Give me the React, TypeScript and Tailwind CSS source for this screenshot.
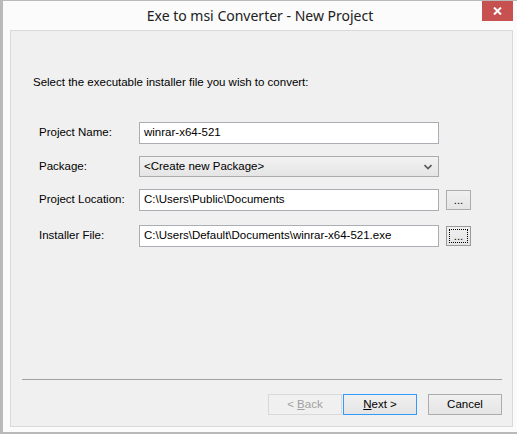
import React from 'react';

const font = { fontFamily: '"Liberation Sans", Arial, sans-serif' };

const Field = ({ value }: { value: string }) => (
  <div className="w-[300px] h-[22px] border border-[#abadb3] bg-white flex items-center pl-[4px] text-black whitespace-nowrap overflow-hidden">
    {value}
  </div>
);

const Browse = ({ focused }: { focused?: boolean }) => (
  <div
    className={`ml-[7px] w-[25px] h-[20px] border bg-gradient-to-b from-[#f0f0f0] to-[#e5e5e5] flex items-center justify-center ${
      focused ? 'border-[#9a9a9a] p-[2px]' : 'border-[#acacac]'
    }`}
  >
    <div
      className={`w-full h-full flex items-center justify-center leading-none text-black ${
        focused ? 'border border-dotted border-black' : ''
      }`}
    >
      <span className="mt-[1px]">...</span>
    </div>
  </div>
);

export default function App() {
  return (
    <div
      className="w-[517px] h-[434px] bg-[#fbfbfb] border-l-[3px] border-t border-b-2 border-[#b9b9b9] flex flex-col"
      style={font}
    >
      {/* title bar */}
      <div className="relative h-[29px] shrink-0 flex justify-center pt-[5px]">
        <span
          className="text-[14px] leading-[20px] text-[#202020]"
          style={{ fontFamily: '"Noto Sans", "Open Sans", sans-serif' }}
        >
          Exe to msi Converter - New Project
        </span>
        <div className="absolute top-0 right-[4px] w-[31px] h-[20px] bg-[#c75050] flex items-center justify-center">
          <svg width="9" height="8" viewBox="0 0 9 8">
            <path d="M1 0.5 L8 7.5 M8 0.5 L1 7.5" stroke="white" strokeWidth="2" />
          </svg>
        </div>
      </div>

      {/* content panel */}
      <div className="ml-[7px] w-[503px] h-[397px] shrink-0 border border-[#d9d9d9] bg-[#f0f0f0] flex flex-col text-[11.5px] text-black">
        <div className="pl-[22px] pt-[45px] leading-[13px]">
          Select the executable installer file you wish to convert:
        </div>

        <div className="pl-[28px] mt-[33px] flex flex-col">
          <div className="flex items-center">
            <span className="w-[100px]">Project Name:</span>
            <Field value="winrar-x64-521" />
          </div>
          <div className="flex items-center mt-[12px]">
            <span className="w-[100px]">Package:</span>
            <div className="w-[300px] h-[21px] border border-[#acacac] bg-gradient-to-b from-[#f2f2f2] to-[#e5e5e5] flex items-center pl-[4px] pr-[6px]">
              <span className="flex-1">&lt;Create new Package&gt;</span>
              <svg width="8" height="6" viewBox="0 0 8 6">
                <path d="M0.5 1 L4 4.5 L7.5 1" stroke="#5a5a5a" strokeWidth="1.6" fill="none" />
              </svg>
            </div>
          </div>
          <div className="flex items-center mt-[12px]">
            <span className="w-[100px]">Project Location:</span>
            <Field value="C:\Users\Public\Documents" />
            <Browse />
          </div>
          <div className="flex items-center mt-[14px]">
            <span className="w-[100px]">Installer File:</span>
            <Field value="C:\Users\Default\Documents\winrar-x64-521.exe" />
            <Browse focused />
          </div>
        </div>

        <div className="mt-auto pb-[11px] flex flex-col">
          <div className="ml-[11px] w-[480px] h-px bg-[#a0a0a0]" />
          <div className="mt-[14px] pr-[10px] flex justify-end">
            <div className="w-[74px] h-[21px] border border-[#d9d9d9] bg-[#f0f0f0] flex items-center justify-center text-[#a0a0a0]">
              &lt; <span className="underline ml-[3px]">B</span>ack
            </div>
            <div className="ml-[1px] w-[74px] h-[21px] border border-[#3399ff] bg-gradient-to-b from-[#f0f0f0] to-[#e5e5e5] flex items-center justify-center">
              <span className="underline">N</span>ext &gt;
            </div>
            <div className="ml-[11px] w-[74px] h-[21px] border border-[#acacac] bg-gradient-to-b from-[#f0f0f0] to-[#e5e5e5] flex items-center justify-center">
              Cancel
            </div>
          </div>
        </div>
      </div>
    </div>
  );
}
